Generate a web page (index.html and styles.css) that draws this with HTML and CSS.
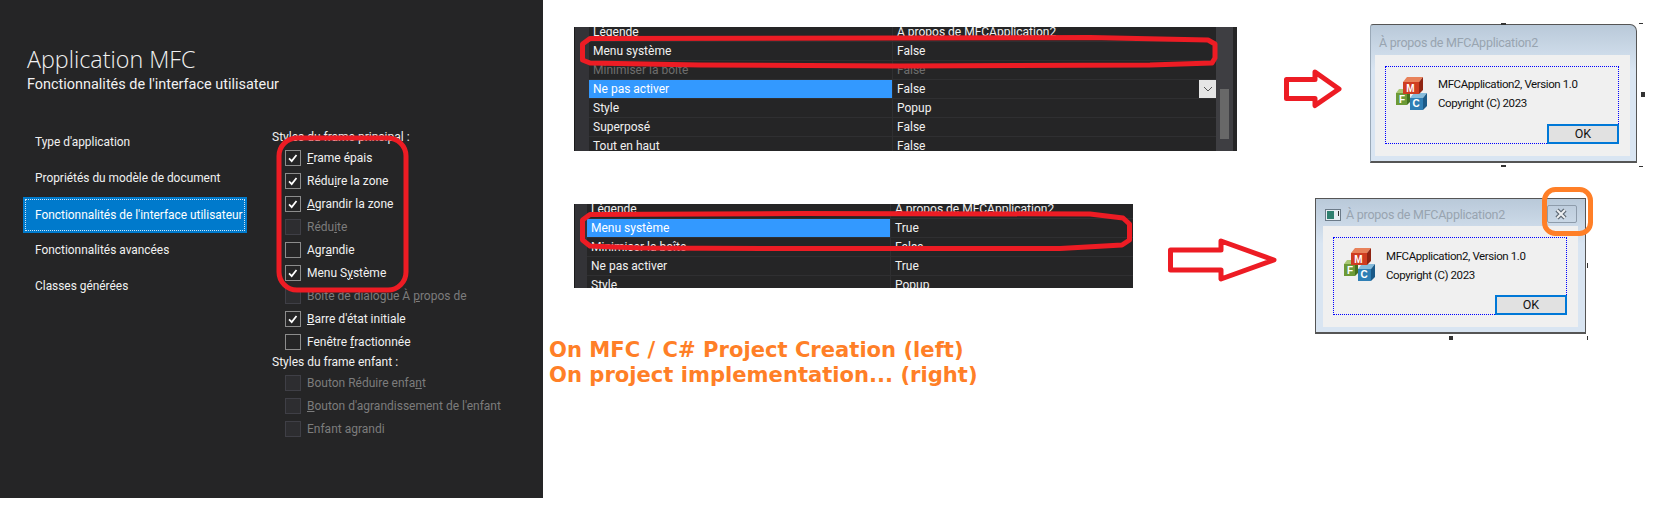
FILE: index.html
```html
<!DOCTYPE html>
<html lang="fr">
  <head>
    <meta charset="UTF-8" />
    <title>MFC dialog styles</title>
    <link rel="stylesheet" href="styles.css">
  </head>
  <body>
    <svg class="defs" width="0" height="0">
      <symbol id="check" viewBox="0 0 16 16">
        <path d="M3.5 8.5 6.5 11.5 12 4.5" fill="none" stroke="#fff" stroke-width="2" />
      </symbol>
    </svg>

    <div class="wizard">
      <h1 class="wizard-title">Application MFC</h1>
      <h2 class="wizard-sub">Fonctionnalités de l'interface utilisateur</h2>
      <div class="wizard-body">
        <ul class="nav">
          <li>Type d'application</li>
          <li>Propriétés du modèle de document</li>
          <li class="nav-active"><span>Fonctionnalités de l'interface utilisateur</span></li>
          <li>Fonctionnalités avancées</li>
          <li>Classes générées</li>
        </ul>
        <div class="options">
          <div class="group-label">Styles du frame principal :</div>
          <label class="opt"><span class="box"><svg><use href="#check" /></svg></span><span><u>F</u>rame épais</span></label>
          <label class="opt"><span class="box"><svg><use href="#check" /></svg></span><span>Rédu<u>i</u>re la zone</span></label>
          <label class="opt"><span class="box"><svg><use href="#check" /></svg></span><span><u>A</u>grandir la zone</span></label>
          <label class="opt off"><span class="box"></span><span>Rédu<u>i</u>te</span></label>
          <label class="opt"><span class="box"></span><span>Agr<u>a</u>ndie</span></label>
          <label class="opt"><span class="box"><svg><use href="#check" /></svg></span><span>Menu S<u>y</u>stème</span></label>
          <label class="opt off"><span class="box"></span><span>Boîte de dialogue À <u>p</u>ropos de</span></label>
          <label class="opt"><span class="box"><svg><use href="#check" /></svg></span><span><u>B</u>arre d'état initiale</span></label>
          <label class="opt"><span class="box"></span><span>Fenêtre <u>f</u>ractionnée</span></label>
          <div class="group-label group-child">Styles du frame enfant :</div>
          <label class="opt off"><span class="box"></span><span>Bouton Réduire enfa<u>n</u>t</span></label>
          <label class="opt off"><span class="box"></span><span><u>B</u>outon d'agrandissement de l'enfant</span></label>
          <label class="opt off"><span class="box"></span><span>Enfant a<u>g</u>randi</span></label>
        </div>
      </div>
    </div>

    <div class="props props-top">
      <div class="props-rows">
        <div class="row"><div class="name">Légende</div><div class="val">À propos de MFCApplication2</div></div>
        <div class="row"><div class="name">Menu système</div><div class="val">False</div></div>
        <div class="row dim"><div class="name">Minimiser la boîte</div><div class="val">False</div></div>
        <div class="row"><div class="name sel">Ne pas activer</div><div class="val">False<span class="drop"><svg width="10" height="6" viewBox="0 0 10 6"><path d="M1 1 5 5 9 1" fill="none" stroke="#555" /></svg></span></div></div>
        <div class="row"><div class="name">Style</div><div class="val">Popup</div></div>
        <div class="row"><div class="name">Superposé</div><div class="val">False</div></div>
        <div class="row"><div class="name">Tout en haut</div><div class="val">False</div></div>
      </div>
      <div class="scroll"><div class="thumb"></div></div>
    </div>

    <div class="props props-bottom">
      <div class="props-rows">
        <div class="row"><div class="name">Légende</div><div class="val">À propos de MFCApplication2</div></div>
        <div class="row"><div class="name sel">Menu système</div><div class="val">True</div></div>
        <div class="row"><div class="name">Minimiser la boîte</div><div class="val">False</div></div>
        <div class="row"><div class="name">Ne pas activer</div><div class="val">True</div></div>
        <div class="row"><div class="name">Style</div><div class="val">Popup</div></div>
      </div>
    </div>

    <div class="note">
      <div>On MFC / C# Project Creation (left)</div>
      <div>On project implementation... (right)</div>
    </div>

    <div class="dlg dlg-top">
      <div class="dlg-title">À propos de MFCApplication2</div>
      <div class="dlg-client">
        <div class="dlg-dots">
          <svg class="dlg-icon" width="31" height="33" viewBox="0 0 31 33">
            <polygon points="0,16 3,12 14,12 11,16" fill="#a9c873" />
            <polygon points="0,16 11,16 11,28 0,28" fill="#6c9a36" />
            <polygon points="11,16 14,12 14,25 11,28" fill="#44711f" />
            <text x="6" y="26" class="cube-letter">F</text>
            <polygon points="14,21 18,16 31,16 27,21" fill="#86bcdc" />
            <polygon points="14,21 27,21 27,33 14,33" fill="#2f7fb5" />
            <polygon points="27,21 31,16 31,29 27,33" fill="#1b5a88" />
            <text x="20" y="30" class="cube-letter">C</text>
            <polygon points="7,5 11,0 27,0 23,5" fill="#e8825a" />
            <polygon points="7,5 23,5 23,17 7,17" fill="#cf3d20" />
            <polygon points="23,5 27,0 27,13 23,17" fill="#8f2412" />
            <text x="14.5" y="15" class="cube-letter">M</text>
          </svg>
          <div class="dlg-text">
            <div>MFCApplication2, Version 1.0</div>
            <div>Copyright (C) 2023</div>
          </div>
          <div class="dlg-ok">OK</div>
        </div>
      </div>
    </div>

    <div class="dlg dlg-bottom">
      <div class="dlg-title">
        <svg class="title-icon" width="16" height="12" viewBox="0 0 16 12">
          <rect x="0.5" y="0.5" width="15" height="11" fill="#e8edf2" stroke="#6b7a88" />
          <rect x="2" y="2" width="7" height="8" fill="#2f7f6f" />
          <rect x="13" y="2" width="1" height="5" fill="#333" />
        </svg>
        À propos de MFCApplication2
        <span class="close"><svg width="14" height="12" viewBox="0 0 14 12"><path d="M3 2 11 10M11 2 3 10" stroke="#5a6570" stroke-width="4.4" /><path d="M3 2 11 10M11 2 3 10" stroke="#eef0f2" stroke-width="2" /></svg></span>
      </div>
      <div class="dlg-client">
        <div class="dlg-dots">
          <svg class="dlg-icon" width="31" height="33" viewBox="0 0 31 33">
            <polygon points="0,16 3,12 14,12 11,16" fill="#a9c873" />
            <polygon points="0,16 11,16 11,28 0,28" fill="#6c9a36" />
            <polygon points="11,16 14,12 14,25 11,28" fill="#44711f" />
            <text x="6" y="26" class="cube-letter">F</text>
            <polygon points="14,21 18,16 31,16 27,21" fill="#86bcdc" />
            <polygon points="14,21 27,21 27,33 14,33" fill="#2f7fb5" />
            <polygon points="27,21 31,16 31,29 27,33" fill="#1b5a88" />
            <text x="20" y="30" class="cube-letter">C</text>
            <polygon points="7,5 11,0 27,0 23,5" fill="#e8825a" />
            <polygon points="7,5 23,5 23,17 7,17" fill="#cf3d20" />
            <polygon points="23,5 27,0 27,13 23,17" fill="#8f2412" />
            <text x="14.5" y="15" class="cube-letter">M</text>
          </svg>
          <div class="dlg-text">
            <div>MFCApplication2, Version 1.0</div>
            <div>Copyright (C) 2023</div>
          </div>
          <div class="dlg-ok">OK</div>
        </div>
      </div>
    </div>

    <!-- annotations drawn on top of the screenshots -->
    <svg class="marks" width="1674" height="523" viewBox="0 0 1674 523">
      <g fill="none" stroke="#ed1c24" stroke-width="5" stroke-linejoin="round">
        <rect x="279" y="138" width="127" height="152" rx="18" />
        <path d="M590 38.5 900 38 1090 37.5 1208 40 1215 44 1215 58 1212 63 1150 65 900 66 700 65 590 63 582.5 60 582.5 44Z" />
        <path d="M590 214.5 800 213.5 1090 214 1123 218 1129.5 224 1129.5 240 1122 245 1060 248.5 800 248.5 640 248 590 246 582.5 240 582.5 220Z" />
        <path d="M1286.5 79.5 1315 79.5 1315 72 1339 89 1315 105.5 1315 98.5 1286.5 98.5Z" />
        <path d="M1170.5 250 1221 250 1221 241 1274 260 1221 279 1221 270 1170.5 270Z" />
      </g>
      <rect x="1544.5" y="189.5" width="46" height="44" rx="11" fill="none" stroke="#ff7f27" stroke-width="5" />
      <g fill="#333">
        <rect x="1501" y="23" width="5" height="2" />
        <rect x="1639" y="23" width="4" height="1" />
        <rect x="1641" y="92" width="4" height="5" />
        <rect x="1501" y="165" width="5" height="2" />
        <rect x="1639" y="166" width="4" height="1" />
        <rect x="1587" y="263" width="1" height="5" />
        <rect x="1449" y="336" width="4" height="4" />
        <rect x="1587" y="336" width="1" height="4" />
      </g>
    </svg>
  </body>
</html>
```

FILE: styles.css
```css
body {
  margin: 0;
  width: 1674px;
  height: 523px;
  position: relative;
  overflow: hidden;
  background-color: white;
  font-family: Roboto, "Open Sans", sans-serif;
}
.defs {
  position: absolute;
}
.marks {
  position: absolute;
  left: 0;
  top: 0;
  pointer-events: none;
}

/* left wizard panel */
.wizard {
  position: absolute;
  left: 0;
  top: 0;
  width: 543px;
  height: 498px;
  box-sizing: border-box;
  padding: 44px 0 0 27px;
  background-color: #252526;
  color: #f1f1f1;
}
.wizard-title {
  margin: 0;
  font-family: "Open Sans", sans-serif;
  font-size: 23.3px;
  line-height: 31px;
  font-weight: 300;
}
.wizard-sub {
  margin: 0;
  font-size: 14.45px;
  line-height: 20px;
  font-weight: 400;
}
.wizard-body {
  display: flex;
  margin-top: 32px;
  margin-left: -4px;
}
.nav {
  list-style: none;
  margin: -3px 0 0;
  padding: 0;
  width: 224px;
  font-size: 11.9px;
}
.nav li {
  height: 36px;
  line-height: 36px;
  padding-left: 12px;
}
.nav li.nav-active {
  background-color: #007acc;
  padding: 2px;
  margin-top: 1px;
  margin-bottom: -1px;
  box-sizing: border-box;
  color: white;
}
.nav-active span {
  display: block;
  height: 32px;
  line-height: 30px;
  box-sizing: border-box;
  padding-left: 9px;
  border: 1px dotted #cfe6f7;
  white-space: nowrap;
}
.options {
  margin-left: 25px;
  font-size: 12px;
}
.group-label {
  line-height: 17px;
  height: 17px;
  margin-top: 2px;
}
.group-child {
  margin-top: 1px;
  margin-bottom: 0;
}
.opt {
  display: flex;
  align-items: center;
  height: 23px;
  margin-left: 13px;
  gap: 6px;
}
.opt.off {
  color: #7c7c7c;
}
.box {
  width: 16px;
  height: 16px;
  box-sizing: border-box;
  border: 1px solid #8c8c8c;
  flex: none;
}
.box svg {
  display: block;
  width: 14px;
  height: 14px;
}
.off .box {
  border-color: #3f3f46;
  background-color: #2d2d30;
}

/* property grids */
.props {
  position: absolute;
  left: 574px;
  display: flex;
  background-color: #252526;
  color: #f1f1f1;
  font-size: 12px;
  overflow: hidden;
  border-left: 1px solid #1b1b1c;
}
.props-top {
  top: 27px;
  width: 663px;
  height: 124px;
  box-sizing: border-box;
}
.props-bottom {
  top: 204px;
  width: 559px;
  height: 84px;
  box-sizing: border-box;
}
.props-rows {
  flex: 1;
  margin-top: -4px;
  background-color: #333337;
  padding-left: 14px;
}
.props-bottom .props-rows {
  padding-left: 12px;
}
.row {
  display: flex;
  height: 19px;
  line-height: 18px;
  box-sizing: border-box;
  border-bottom: 1px solid #2f2f31;
  background-color: #252526;
}
.name {
  width: 304px;
  padding-left: 4px;
  box-sizing: border-box;
  border-right: 1px solid #2f2f31;
  flex: none;
}
.sel {
  background-color: #3399ff;
  color: white;
}
.val {
  flex: 1;
  padding-left: 4px;
  position: relative;
}
.dim {
  color: #6d6d6d;
}
.drop {
  position: absolute;
  right: 0;
  top: 0;
  width: 17px;
  height: 18px;
  background-color: #e6e6e6;
  display: flex;
  align-items: center;
  justify-content: center;
}
.scroll {
  width: 21px;
  background-color: #3e3e42;
  padding: 62px 4px 0;
  box-sizing: border-box;
  border-right: 4px solid #252526;
}
.thumb {
  width: 9px;
  height: 50px;
  background-color: #686868;
}

/* orange caption */
.note {
  position: absolute;
  left: 549px;
  top: 337px;
  font-family: "DejaVu Sans", sans-serif;
  font-weight: bold;
  font-size: 21.1px;
  line-height: 25px;
  color: #ff7f27;
  white-space: nowrap;
}

/* about dialogs */
.dlg {
  position: absolute;
  box-sizing: border-box;
  background: linear-gradient(#b9c9d9, #d9e5f2 45px);
  border: 1px solid #555;
  border-bottom-width: 2px;
}
.dlg-top {
  left: 1370px;
  top: 24px;
  width: 267px;
  height: 139px;
  border-left-color: #9aa9b8;
  border-top-right-radius: 7px;
  border-top-left-radius: 3px;
  padding: 0 6px 0 4px;
}
.dlg-bottom {
  left: 1315px;
  top: 198px;
  width: 271px;
  height: 136px;
  padding: 0 7px;
}
.dlg-title {
  display: flex;
  align-items: center;
  height: 30px;
  box-sizing: border-box;
  padding: 5px 0 0 4px;
  font-size: 12.5px;
  letter-spacing: -0.25px;
  color: #98a4b0;
  position: relative;
}
.dlg-bottom .dlg-title {
  height: 27px;
  padding: 4px 0 0 2px;
}
.title-icon {
  margin-right: 5px;
}
.close {
  position: absolute;
  right: 1px;
  top: 6px;
  width: 30px;
  height: 18px;
  box-sizing: border-box;
  border: 1px solid #8e9cab;
  border-radius: 2px;
  padding-right: 3px;
  display: flex;
  align-items: center;
  justify-content: center;
}
.dlg-client {
  background-color: #f0f0f0;
  height: 101px;
  padding: 11px 11px 0 10px;
  box-sizing: border-box;
  color: #111;
  font-size: 11.5px;
}
.dlg-dots {
  position: relative;
  height: 78px;
  box-sizing: border-box;
  border: 1px dotted #0000ff;
  display: flex;
  padding: 10px 0 0 10px;
  gap: 11px;
}
.dlg-icon {
  flex: none;
}
.cube-letter {
  font-family: "Liberation Sans", sans-serif;
  font-weight: bold;
  font-size: 10px;
  fill: white;
  text-anchor: middle;
}
.dlg-text {
  line-height: 19px;
  margin-top: -2px;
  letter-spacing: -0.4px;
}
.dlg-bottom .dlg-text {
  margin-top: -1px;
}
.dlg-ok {
  position: absolute;
  right: -1px;
  bottom: -1px;
  width: 72px;
  height: 20px;
  box-sizing: border-box;
  border: 2px solid #0078d7;
  background-color: #e1e1e1;
  text-align: center;
  line-height: 16px;
  letter-spacing: 0;
  font-size: 12.5px;
}
```
